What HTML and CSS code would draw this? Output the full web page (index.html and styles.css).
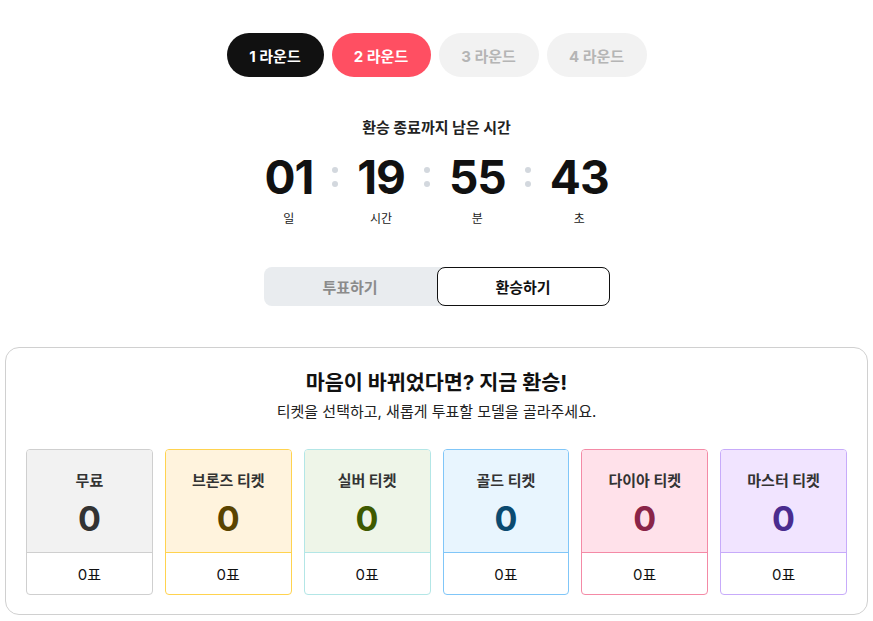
FILE: index.html
```html
<!DOCTYPE html>
<html lang="ko">
<head>
<meta charset="utf-8">
<link rel="stylesheet" href="styles.css">
</head>
<body>
<main class="page">
  <nav class="rounds">
    <button class="round round-done">1 라운드</button>
    <button class="round round-active">2 라운드</button>
    <button class="round round-off">3 라운드</button>
    <button class="round round-off">4 라운드</button>
  </nav>

  <section class="timer">
    <h2 class="timer-title">환승 종료까지 남은 시간</h2>
    <div class="countdown">
      <div class="unit"><span class="num">01</span><span class="lbl">일</span></div>
      <span class="colon"><i></i><i></i></span>
      <div class="unit"><span class="num">19</span><span class="lbl">시간</span></div>
      <span class="colon"><i></i><i></i></span>
      <div class="unit"><span class="num">55</span><span class="lbl">분</span></div>
      <span class="colon"><i></i><i></i></span>
      <div class="unit"><span class="num">43</span><span class="lbl">초</span></div>
    </div>
  </section>

  <div class="tabs">
    <button class="tab">투표하기</button>
    <button class="tab tab-active">환승하기</button>
  </div>

  <section class="panel">
    <h3 class="panel-title">마음이 바뀌었다면? 지금 환승!</h3>
    <p class="panel-sub">티켓을 선택하고, 새롭게 투표할 모델을 골라주세요.</p>
    <div class="tickets">
      <div class="ticket t-free"><div class="t-top"><span class="t-name">무료</span><span class="t-count">0</span></div><div class="t-bottom">0표</div></div>
      <div class="ticket t-bronze"><div class="t-top"><span class="t-name">브론즈 티켓</span><span class="t-count">0</span></div><div class="t-bottom">0표</div></div>
      <div class="ticket t-silver"><div class="t-top"><span class="t-name">실버 티켓</span><span class="t-count">0</span></div><div class="t-bottom">0표</div></div>
      <div class="ticket t-gold"><div class="t-top"><span class="t-name">골드 티켓</span><span class="t-count">0</span></div><div class="t-bottom">0표</div></div>
      <div class="ticket t-dia"><div class="t-top"><span class="t-name">다이아 티켓</span><span class="t-count">0</span></div><div class="t-bottom">0표</div></div>
      <div class="ticket t-master"><div class="t-top"><span class="t-name">마스터 티켓</span><span class="t-count">0</span></div><div class="t-bottom">0표</div></div>
    </div>
  </section>
</main>
</body>
</html>
```

FILE: styles.css
```css
* { box-sizing: border-box; }
html, body { margin: 0; padding: 0; background: #fff; }
body {
  font-family: "Inter", "Noto Sans CJK KR", sans-serif;
  color: #111;
}
.page {
  padding: 33px 5px 0;
  display: flex;
  flex-direction: column;
  align-items: center;
}
button { font-family: inherit; cursor: pointer; }

.rounds { display: flex; gap: 8px; }
.round {
  width: 99px;
  height: 44px;
  border: 0;
  border-radius: 22px;
  font-size: 15px;
  font-weight: 700;
  padding: 0;
}
.round-done { background: #111; color: #fff; width: 97px; }
.round-active { background: #ff4f62; color: #fff; }
.round-off { background: #f2f2f2; color: #b5b5b5; width: 100px; }

.timer { margin-top: 41px; display: flex; flex-direction: column; align-items: center; }
.timer-title { margin: 0; font-size: 15px; font-weight: 700; color: #222; line-height: 20px; }
.countdown { display: flex; align-items: flex-start; gap: 18px; margin-top: 14px; }
.unit { display: flex; flex-direction: column; align-items: center; }
.num { font-size: 46px; font-weight: 700; line-height: 50px; letter-spacing: -1px; color: #111; }
.lbl { font-size: 12px; line-height: 16px; margin-top: 9px; color: #222; }
.colon { width: 8px; height: 50px; display: flex; flex-direction: column; align-items: center; justify-content: center; gap: 8px; }
.colon i { width: 6px; height: 6px; border-radius: 50%; background: #d3d8de; display: block; }

.tabs {
  margin-top: 40px;
  width: 346px;
  height: 39px;
  background: #e9ecef;
  border-radius: 8px;
  display: flex;
}
.tab {
  flex: 1;
  border: 1px solid transparent;
  background: transparent;
  border-radius: 8px;
  font-size: 15px;
  font-weight: 700;
  color: #8b8b8b;
}
.tab-active { background: #fff; border-color: #111; color: #111; }

.panel {
  margin-top: 41px;
  width: 100%;
  border: 1px solid #d0d0d0;
  border-radius: 14px;
  padding: 21px 20px 19px;
  display: flex;
  flex-direction: column;
  align-items: center;
}
.panel-title { margin: 0; font-size: 20.7px; font-weight: 700; line-height: 28px; color: #111; }
.panel-sub { margin: 4px 0 0; font-size: 15px; line-height: 22px; color: #222; }

.tickets {
  margin-top: 26px;
  width: 100%;
  display: grid;
  grid-template-columns: repeat(6, 1fr);
  gap: 12px;
}
.ticket {
  border: 1px solid #ccc;
  border-radius: 4px;
  overflow: hidden;
  background: #fff;
}
.t-top {
  height: 103px;
  display: flex;
  flex-direction: column;
  align-items: center;
  padding-top: 21px;
  border-bottom: 1px solid #ccc;
}
.t-name { font-size: 15px; font-weight: 700; color: #333; line-height: 20px; }
.t-count { font-size: 34px; font-weight: 700; line-height: 36px; margin-top: 10px; }
.t-bottom { height: 41px; display: flex; align-items: center; justify-content: center; font-size: 15px; color: #111; }

.t-free { border-color: #cfcfcf; }
.t-free .t-top { background: #f2f2f2; border-color: #cfcfcf; }
.t-free .t-count { color: #333; }

.t-bronze { border-color: #ffd34f; }
.t-bronze .t-top { background: #fff3dd; border-color: #ffd34f; }
.t-bronze .t-count { color: #5a4300; }

.t-silver { border-color: #b3e6e6; }
.t-silver .t-top { background: #eef5e8; border-color: #b3e6e6; }
.t-silver .t-count { color: #3e5a00; }

.t-gold { border-color: #80c6f8; }
.t-gold .t-top { background: #e8f5fe; border-color: #80c6f8; }
.t-gold .t-count { color: #0b4a70; }

.t-dia { border-color: #f48aa6; }
.t-dia .t-top { background: #ffe1ea; border-color: #f48aa6; }
.t-dia .t-count { color: #8a2448; }

.t-master { border-color: #c7abfa; }
.t-master .t-top { background: #f1e4ff; border-color: #c7abfa; }
.t-master .t-count { color: #4a2c8f; }
```
